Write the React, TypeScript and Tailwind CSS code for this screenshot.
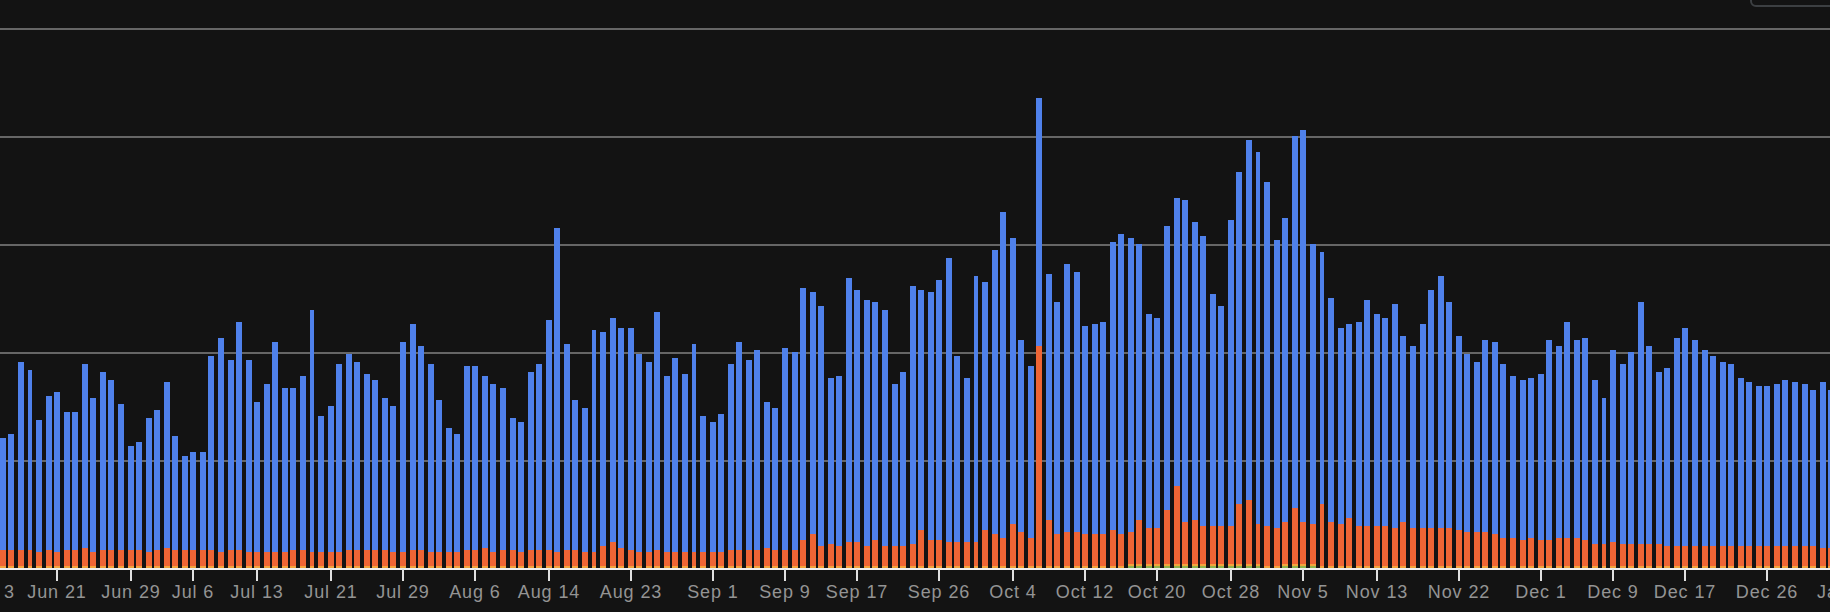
// App.tsx - daily stacked bar chart

// [left, top of the blue part, top of the orange part]
const bars: [number, number, number][] = [
  [0, 438, 550], [8, 434, 550], [18, 362, 550], [28, 370, 550], [36, 420, 552], [46, 396, 550], [54, 392, 552], [64, 412, 550], [72, 412, 550], [82, 364, 548],
  [90, 398, 552], [100, 372, 550], [108, 380, 550], [118, 404, 550], [128, 446, 550], [136, 442, 550], [146, 418, 552], [154, 410, 550], [164, 382, 548], [172, 436, 550],
  [182, 456, 550], [190, 452, 550], [200, 452, 550], [208, 356, 550], [218, 338, 552], [228, 360, 550], [236, 322, 550], [246, 360, 552], [254, 402, 552], [264, 384, 552],
  [272, 342, 552], [282, 388, 552], [290, 388, 550], [300, 376, 550], [310, 310, 552], [318, 416, 552], [328, 406, 552], [336, 364, 552], [346, 354, 550], [354, 362, 550],
  [364, 374, 550], [372, 380, 550], [382, 398, 550], [390, 406, 552], [400, 342, 552], [410, 324, 550], [418, 346, 550], [428, 364, 552], [436, 400, 552], [446, 428, 552],
  [454, 434, 552], [464, 366, 550], [472, 366, 550], [482, 376, 548], [490, 384, 552], [500, 388, 550], [510, 418, 550], [518, 422, 552], [528, 372, 550], [536, 364, 550],
  [546, 320, 550], [554, 228, 552], [564, 344, 550], [572, 400, 550], [582, 408, 552], [592, 330, 552], [600, 332, 546], [610, 318, 542], [618, 328, 548], [628, 328, 550],
  [636, 354, 552], [646, 362, 552], [654, 312, 550], [664, 376, 552], [672, 358, 552], [682, 374, 552], [692, 344, 552], [700, 416, 552], [710, 422, 552], [718, 414, 552],
  [728, 364, 550], [736, 342, 550], [746, 360, 550], [754, 350, 550], [764, 402, 548], [772, 408, 550], [782, 348, 550], [792, 352, 550], [800, 288, 540], [810, 292, 534],
  [818, 306, 546], [828, 378, 544], [836, 376, 546], [846, 278, 542], [854, 290, 542], [864, 300, 546], [872, 302, 540], [882, 310, 546], [892, 384, 546], [900, 372, 546],
  [910, 286, 544], [918, 290, 530], [928, 292, 540], [936, 280, 540], [946, 258, 542], [954, 356, 542], [964, 378, 542], [974, 276, 542], [982, 282, 530], [992, 250, 534],
  [1000, 212, 538], [1010, 238, 524], [1018, 340, 532], [1028, 366, 538], [1036, 98, 346], [1046, 274, 520], [1054, 302, 534], [1064, 264, 532], [1074, 272, 532], [1082, 326, 534],
  [1092, 324, 534], [1100, 322, 534], [1110, 242, 530], [1118, 234, 534], [1128, 238, 532], [1136, 244, 520], [1146, 314, 528], [1154, 318, 528], [1164, 226, 510], [1174, 198, 486],
  [1182, 200, 522], [1192, 222, 520], [1200, 236, 526], [1210, 294, 526], [1218, 306, 526], [1228, 220, 526], [1236, 172, 504], [1246, 140, 500], [1256, 152, 524], [1264, 182, 526],
  [1274, 240, 528], [1282, 218, 522], [1292, 136, 508], [1300, 130, 522], [1310, 244, 524], [1320, 252, 504], [1328, 298, 522], [1338, 328, 524], [1346, 324, 518], [1356, 322, 526],
  [1364, 300, 526], [1374, 314, 526], [1382, 318, 526], [1392, 304, 528], [1400, 336, 522], [1410, 346, 528], [1420, 324, 528], [1428, 290, 528], [1438, 276, 528], [1446, 302, 528],
  [1456, 336, 530], [1464, 354, 532], [1474, 362, 532], [1482, 340, 532], [1492, 342, 534], [1500, 364, 538], [1510, 376, 538], [1520, 380, 540], [1528, 378, 538], [1538, 374, 540],
  [1546, 340, 540], [1556, 346, 538], [1564, 322, 538], [1574, 340, 538], [1582, 338, 540], [1592, 380, 544], [1602, 398, 544], [1610, 350, 542], [1620, 364, 544], [1628, 352, 544],
  [1638, 302, 544], [1646, 346, 544], [1656, 372, 544], [1664, 368, 546], [1674, 338, 546], [1682, 328, 546], [1692, 340, 546], [1702, 350, 546], [1710, 356, 546], [1720, 362, 546],
  [1728, 364, 546], [1738, 378, 546], [1746, 382, 546], [1756, 386, 546], [1764, 386, 546], [1774, 384, 546], [1782, 380, 546], [1792, 382, 546], [1802, 384, 546], [1810, 390, 546],
  [1820, 382, 548], [1828, 390, 548],
]

const narrow = [28, 310, 592, 692, 974, 1256, 1320, 1602]
const baseline = 568
const gridLines = [28, 136, 244, 352, 460]

// bars with the extra green series at the bottom
const hasGreen = (x: number) => (x >= 1128 && x <= 1256) || (x >= 1282 && x <= 1310)

const ticks: [string, number][] = [
  ['Jun 21', 56], ['Jun 29', 130], ['Jul 6', 192], ['Jul 13', 256], ['Jul 21', 330], ['Jul 29', 402],
  ['Aug 6', 474], ['Aug 14', 548], ['Aug 23', 630], ['Sep 1', 712], ['Sep 9', 784], ['Sep 17', 856], ['Sep 26', 938],
  ['Oct 4', 1012], ['Oct 12', 1084], ['Oct 20', 1156], ['Oct 28', 1230], ['Nov 5', 1302], ['Nov 13', 1376], ['Nov 22', 1458],
  ['Dec 1', 1540], ['Dec 9', 1612], ['Dec 17', 1684], ['Dec 26', 1766],
]

const labelClass = "fill-[#949494] text-[18px] tracking-[0.9px] font-['Liberation_Sans',Arial,sans-serif]"

function Chart() {
  return (
    <svg width={1830} height={612} viewBox="0 0 1830 612" shapeRendering="crispEdges" className="block">
      {gridLines.map(y => (
        <rect key={y} x={0} y={y} width={1830} height={2} className="fill-[#666666]" />
      ))}

      {bars.map(([x, top, orange]) => {
        const w = narrow.includes(x) ? 4 : 6
        const green = hasGreen(x)
        const yellowTop = green ? baseline - 4 : baseline - 2
        return (
          <g key={x}>
            <rect x={x} y={top} width={w} height={orange - top} className="fill-[#4f81eb]" />
            <rect x={x} y={orange} width={w} height={yellowTop - orange} className="fill-[#ee6535]" />
            <rect x={x} y={yellowTop} width={w} height={2} className="fill-[#f2a33c]" />
            {green && <rect x={x} y={baseline - 2} width={w} height={2} className="fill-[#8fb24a]" />}
          </g>
        )
      })}

      <rect x={0} y={baseline} width={1830} height={2} className="fill-[#eeeeee]" />

      {/* the first and last labels only show their visible part */}
      <text x={4} y={598} shapeRendering="auto" className={labelClass}>3</text>
      <text x={1817} y={598} shapeRendering="auto" className={labelClass}>Ja</text>

      {ticks.map(([label, x]) => (
        <g key={label}>
          <rect x={x} y={baseline + 1} width={2} height={12} className="fill-[#e0e0e0]" />
          <text x={x + 1} y={598} textAnchor="middle" shapeRendering="auto" className={labelClass}>
            {label}
          </text>
        </g>
      ))}
    </svg>
  )
}

export default function App() {
  return (
    <div className="relative h-[612px] w-[1830px] overflow-hidden bg-[#131313]">
      <Chart />
      {/* control above the chart, only its bottom edge is on screen */}
      <div className="absolute right-[-10px] top-[-20px] h-[27px] w-[90px] rounded-md border-2 border-[#3c3f42]" />
    </div>
  )
}
